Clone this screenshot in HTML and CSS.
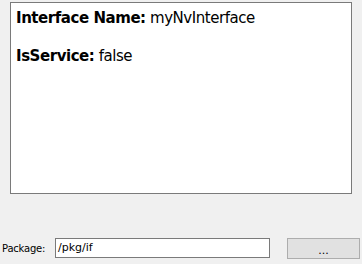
FILE: index.html
```html
<!DOCTYPE html>
<html>
<head>
<meta charset="utf-8">
<link rel="stylesheet" href="styles.css">
</head>
<body>
<div class="page">
  <div class="info">
    <p class="line"><b>Interface Name:</b> myNvInterface</p>
    <p class="line"><b>IsService:</b> false</p>
  </div>
  <div class="spacer"></div>
  <div class="row">
    <span class="label">Package:</span>
    <div class="input">/pkg/if</div>
    <div class="button">...</div>
  </div>
</div>
</body>
</html>
```
FILE: styles.css
```css
html, body {
  margin: 0;
  padding: 0;
  background: #f0f0f0;
}
.page {
  width: 362px;
  height: 264px;
  display: flex;
  flex-direction: column;
  box-sizing: border-box;
  padding: 2px 0 0 0;
}
.info {
  margin-left: 10px;
  width: 342px;
  height: 192px;
  box-sizing: border-box;
  background: #fff;
  border: 1px solid #7a7a7a;
  padding: 5px 0 0 5px;
  font-family: "DejaVu Sans", sans-serif;
  font-size: 15px;
  letter-spacing: -0.45px;
  color: #000;
}
.line {
  margin: 0 0 18px 0;
  line-height: 20px;
}
.spacer {
  height: 44px;
}
.row {
  display: flex;
  align-items: flex-start;
  font-family: "DejaVu Sans", sans-serif;
  font-size: 11px;
}
.label {
  margin-left: 2px;
  width: 53px;
  font-size: 10px;
  letter-spacing: -0.2px;
  line-height: 21px;
  color: #000;
}
.input {
  width: 215px;
  height: 20px;
  box-sizing: border-box;
  background: #fff;
  border: 1px solid #7a7a7a;
  padding: 0 2px;
  line-height: 18px;
}
.button {
  margin-left: 17px;
  width: 73px;
  height: 21px;
  box-sizing: border-box;
  background: #e1e1e1;
  border: 1px solid #adadad;
  text-align: center;
  line-height: 24px;
}
```
